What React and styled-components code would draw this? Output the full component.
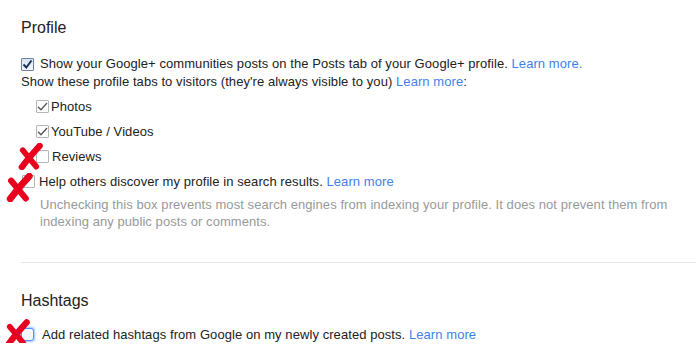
import React from "react";
import styled, { createGlobalStyle } from "styled-components";

const Global = createGlobalStyle`
  html, body { margin: 0; padding: 0; background: #fff; }
  body {
    font-family: "Liberation Sans", Arial, sans-serif;
    font-size: 13px;
    letter-spacing: 0.07px;
    color: #222;
  }
`;

const Page = styled.div`
  position: relative;
  padding: 18px 0 0 21px;
`;

const SectionTitle = styled.h2`
  margin: ${(p) => p.$mt || 0}px 0 0 0;
  font-size: 16px;
  font-weight: normal;
  letter-spacing: 0;
  line-height: 20px;
  color: #222;
`;

const Row = styled.div`
  position: relative;
  display: flex;
  align-items: center;
  height: 17px;
  line-height: 17px;
  margin-top: ${(p) => p.$mt || 0}px;
  padding-left: ${(p) => p.$indent || 0}px;
  gap: ${(p) => p.$gap || 0}px;
  white-space: nowrap;
`;

const Line = styled.div`
  margin-top: 1px;
  line-height: 17px;
  height: 17px;
  white-space: nowrap;
`;

const SubList = styled.div`
  display: flex;
  flex-direction: column;
  gap: 8px;
  margin-top: 8px;
`;

const Link = styled.a`
  color: #427fed;
  text-decoration: none;
  cursor: pointer;
`;

const Hint = styled.p`
  margin: 6px 0 0 0;
  padding-left: 19px;
  line-height: 17px;
  color: #999;
`;

const Divider = styled.hr`
  margin: 32px 0 0 0;
  border: 0;
  height: 1px;
  background: #e5e5e5;
`;

const Box = styled.span`
  position: relative;
  flex: none;
  display: inline-flex;
  align-items: center;
  justify-content: center;
  box-sizing: border-box;
  width: 13px;
  height: 13px;
  margin-top: ${(p) => p.$dy || 0}px;
  border: 1px solid
    ${(p) =>
      p.$variant === "primary"
        ? "#6e829b"
        : p.$variant === "focus"
        ? "#4d90fe"
        : "#b5b5b5"};
  border-radius: ${(p) => (p.$variant === "focus" ? "3px" : "1px")};
  background: ${(p) =>
    p.$variant === "primary"
      ? "linear-gradient(#d6e4f3, #f4f8fc)"
      : p.$variant === "focus"
      ? "#f6faff"
      : "#fff"};
  box-shadow: ${(p) =>
    p.$variant === "focus" ? "0 0 2px 1px rgba(77,144,254,0.55)" : "none"};
`;

const Mark = styled.svg`
  position: absolute;
  left: ${(p) => p.$x}px;
  top: ${(p) => p.$y}px;
  width: ${(p) => p.$w}px;
  height: ${(p) => p.$h}px;
  pointer-events: none;
`;

function Checkbox({ variant, checked, dy }) {
  return (
    <Box $variant={variant} $dy={dy}>
      {checked && (
        <svg width="11" height="11" viewBox="0 0 11 11">
          <path
            d={variant === "primary" ? "M1.5 5.5 L4.3 8.5 L9.5 1.5" : "M1 5.8 L4 8.8 L10 2"}
            fill="none"
            stroke={variant === "primary" ? "#1c2f5a" : "#555"}
            strokeWidth={variant === "primary" ? 2 : 1.3}
            strokeLinejoin="miter"
          />
        </svg>
      )}
    </Box>
  );
}

function RedX({ x, y, w = 26, h = 28 }) {
  return (
    <Mark $x={x} $y={y} $w={w} $h={h} viewBox="0 0 26 28">
      <path
        d="M22.5 3 C17 9, 10 17, 4 25"
        fill="none"
        stroke="#e8001e"
        strokeWidth="6.5"
        strokeLinecap="round"
      />
      <path
        d="M5 7.5 C9.5 13, 14 18.5, 19 24.5"
        fill="none"
        stroke="#e8001e"
        strokeWidth="6"
        strokeLinecap="round"
      />
    </Mark>
  );
}

export default function App() {
  return (
    <>
      <Global />
      <Page>
        <SectionTitle>Profile</SectionTitle>

        <Row $mt={17} $gap={6}>
          <Checkbox variant="primary" checked dy={1} />
          <span>
            Show your Google+ communities posts on the Posts tab of your Google+ profile.{" "}
            <Link>Learn more.</Link>
          </span>
        </Row>
        <Line>
          Show these profile tabs to visitors (they're always visible to you){" "}
          <Link>Learn more</Link>:
        </Line>

        <SubList>
          <Row $indent={15} $gap={2}>
            <Checkbox variant="plain" checked />
            <span>Photos</span>
          </Row>
          <Row $indent={15} $gap={2}>
            <Checkbox variant="plain" checked />
            <span>YouTube / Videos</span>
          </Row>
          <Row $indent={15} $gap={3}>
            <Checkbox variant="plain" />
            <span>Reviews</span>
            <RedX x={-3} y={-5} w={25} h={27} />
          </Row>
        </SubList>

        <Row $mt={8} $indent={1} $gap={4}>
          <Checkbox variant="plain" />
          <span>
            Help others discover my profile in search results. <Link>Learn more</Link>
          </span>
          <RedX x={-15} y={0} w={27} h={29} />
        </Row>
        <Hint>
          Unchecking this box prevents most search engines from indexing your profile. It does
          not prevent them from indexing any public posts or comments.
        </Hint>

        <Divider />

        <SectionTitle $mt={28}>Hashtags</SectionTitle>
        <Row $mt={15} $indent={0} $gap={8}>
          <Checkbox variant="focus" />
          <span>
            Add related hashtags from Google on my newly created posts. <Link>Learn more</Link>
          </span>
          <RedX x={-16} y={-7} w={25} h={28} />
        </Row>
      </Page>
    </>
  );
}
